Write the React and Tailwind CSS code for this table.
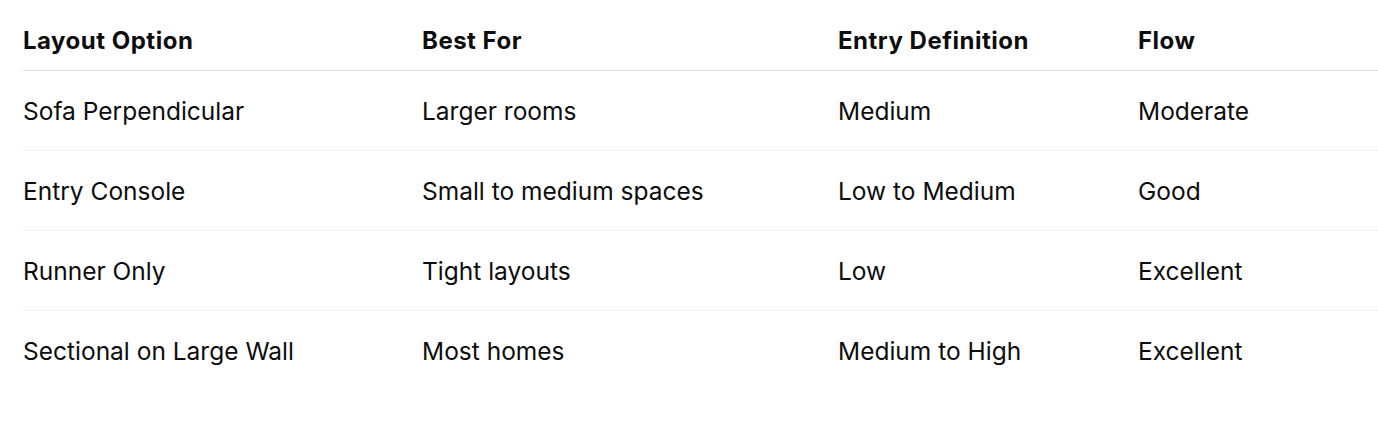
export default function App() {
  const rows = [
    ["Sofa Perpendicular", "Larger rooms", "Medium", "Moderate"],
    ["Entry Console", "Small to medium spaces", "Low to Medium", "Good"],
    ["Runner Only", "Tight layouts", "Low", "Excellent"],
    ["Sectional on Large Wall", "Most homes", "Medium to High", "Excellent"],
  ];
  return (
    <div className="bg-white w-[1378px] h-[434px] pl-[23px] pt-[12px] text-[#0d0d0d]" style={{ fontFamily: "Inter, 'Noto Sans', sans-serif" }}>
      <table className="w-[1355px] table-fixed border-collapse text-[24.5px] leading-[30px]">
        <colgroup>
          <col className="w-[399px]" />
          <col className="w-[416px]" />
          <col className="w-[300px]" />
          <col className="w-[240px]" />
        </colgroup>
        <thead>
          <tr className="border-b border-[#dedede]">
            {["Layout Option", "Best For", "Entry Definition", "Flow"].map((h) => (
              <th key={h} className="text-left font-bold text-[24px] tracking-[0.5px] pt-[14px] pb-[14px] px-0">{h}</th>
            ))}
          </tr>
        </thead>
        <tbody>
          {rows.map((r, i) => (
            <tr key={i} className={i < rows.length - 1 ? "border-b border-[#f0f0f0]" : ""}>
              {r.map((c, j) => (
                <td key={j} className="pt-[25px] pb-[24px] px-0 font-normal">{c}</td>
              ))}
            </tr>
          ))}
        </tbody>
      </table>
    </div>
  );
}
